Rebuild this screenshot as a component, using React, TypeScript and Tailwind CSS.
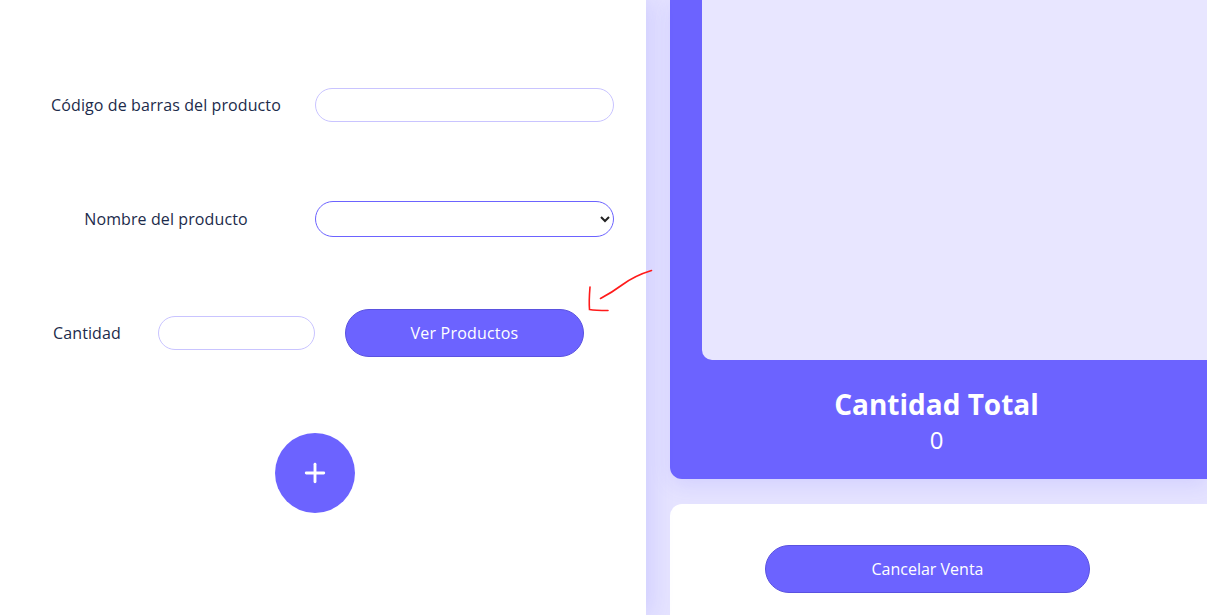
import { Plus } from "lucide-react"

const labelCls = "text-[16px] tracking-[0.1px] text-[#1c2b4b] text-center"

function SaleForm() {
  return (
    <div className="relative z-10 flex h-full w-[646px] shrink-0 flex-col bg-white pt-[88px] shadow-[4px_0_22px_rgba(108,99,255,0.18)]">
      <div className="flex items-center pl-[40px]">
        <label className={`${labelCls} w-[252px]`}>Código de barras del producto</label>
        <input
          type="text"
          className="ml-[23px] h-[34px] w-[299px] rounded-full border border-[#c9c4ff] bg-white px-4 outline-none"
        />
      </div>

      <div className="mt-[79px] flex items-center pl-[40px]">
        <label className={`${labelCls} w-[252px]`}>Nombre del producto</label>
        <select className="ml-[23px] h-[36px] w-[299px] rounded-full border border-[#6c63ff] bg-white px-3 text-[15px] text-[#222] outline-none">
          <option value=""></option>
        </select>
      </div>

      <div className="mt-[72px] flex items-center pl-[40px]">
        <label className={`${labelCls} w-[94px]`}>Cantidad</label>
        <input
          type="number"
          className="ml-[24px] h-[34px] w-[157px] rounded-full border border-[#c9c4ff] bg-white px-4 outline-none"
        />
        <button className="ml-[30px] h-[48px] w-[239px] rounded-full border border-[#5a52e0] bg-[#6c63ff] text-[16px] tracking-[0.2px] text-white">
          Ver Productos
        </button>
      </div>

      <div className="mt-[76px] pl-[275px]">
        <button className="flex h-[80px] w-[80px] items-center justify-center rounded-full bg-[#6c63ff] text-white">
          <Plus size={30} strokeWidth={2.3} />
        </button>
      </div>
    </div>
  )
}

function SaleSummary() {
  return (
    <div className="flex h-full flex-1 flex-col pl-[24px]">
      <div className="flex h-[479px] flex-col rounded-bl-[12px] bg-[#6c63ff] pl-[32px] shadow-[0_6px_20px_rgba(108,99,255,0.15)]">
        <div className="h-[360px] rounded-bl-[10px] bg-[#e8e6ff]" />
        <div className="flex flex-1 flex-col items-center pr-[36px] pt-[26px] text-white">
          <span className="text-[28px] font-bold leading-[36px]">Cantidad Total</span>
          <span className="mt-[2px] text-[24px] leading-[32px]">0</span>
        </div>
      </div>
      <div className="mt-[25px] flex-1 rounded-tl-[12px] bg-white pl-[95px] pt-[41px]">
        <button className="h-[48px] w-[325px] rounded-full border border-[#5a52e0] bg-[#6c63ff] text-[16px] text-white">
          Cancelar Venta
        </button>
      </div>
    </div>
  )
}

export default function App() {
  return (
    <div
      className="relative flex h-[615px] w-full overflow-hidden bg-[#e5e3ff]"
      style={{ fontFamily: '"Open Sans", "Noto Sans", sans-serif' }}
    >
      <SaleForm />
      <SaleSummary />
      {/* red hand-drawn annotation arrow */}
      <svg
        className="pointer-events-none absolute left-0 top-0 z-20"
        width="1207"
        height="615"
        fill="none"
      >
        <path
          d="M651.5 270.5 C640 274 630 279 622 285 C614 291 607 295 600.5 298.5"
          stroke="#ff1a1a"
          strokeWidth="1.6"
          strokeLinecap="round"
        />
        <path
          d="M590 287 C589.5 293 589 303 589.5 309.5 C595 310.5 602 310.5 608 310.5"
          stroke="#ff1a1a"
          strokeWidth="1.6"
          strokeLinecap="round"
        />
      </svg>
    </div>
  )
}
